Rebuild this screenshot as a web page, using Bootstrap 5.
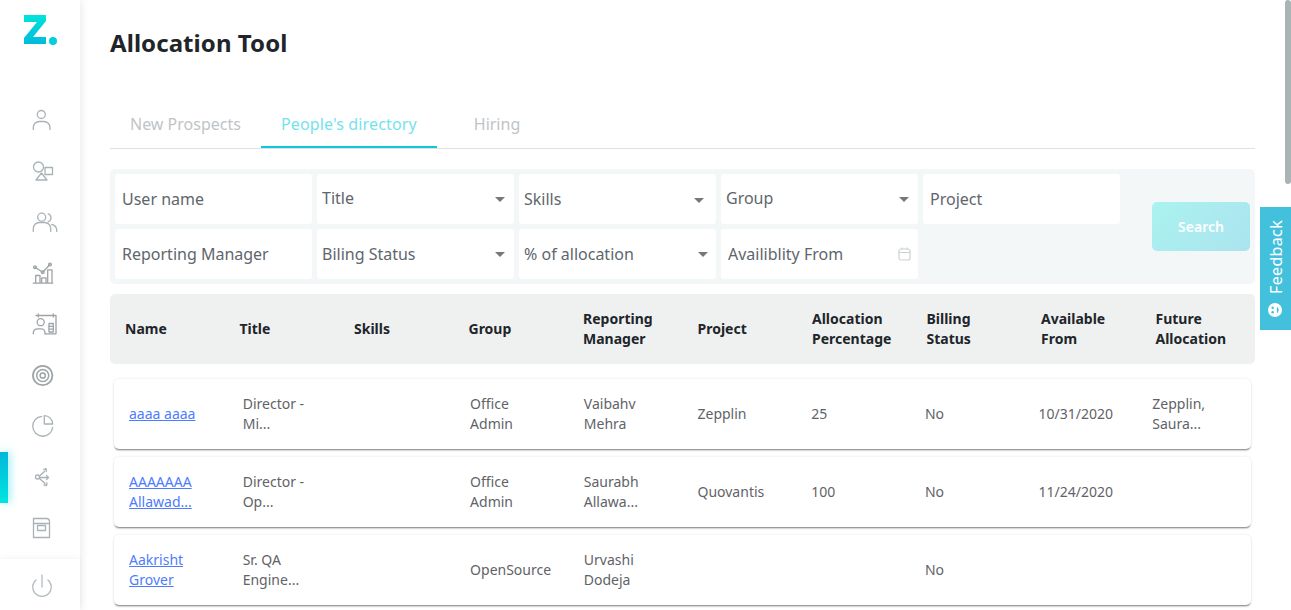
<!DOCTYPE html>
<html lang="en">
<head>
  <meta charset="UTF-8" />
  <meta name="viewport" content="width=device-width, initial-scale=1" />
  <title>Allocation Tool</title>
  <link href="https://cdn.jsdelivr.net/npm/bootstrap@5.3.0/dist/css/bootstrap.min.css" rel="stylesheet" />
  <style>
    html, body { height: 610px; overflow: hidden; }
    body { font-family: "Noto Sans", sans-serif; background: #fff; color: #212529; }
    .side-rail { width: 80px; height: 610px; flex: none; background: #fff; box-shadow: 2px 0 8px rgba(0,0,0,.08); position: relative; z-index: 2; }
    .rail-logo { height: 82px; padding: 14px 0 0 24px; }
    .rail-icons { padding-top: 12px; }
    .rail-item { height: 51px; display: flex; align-items: center; justify-content: center; padding-left: 4px; position: relative; }
    .rail-item svg { width: 24px; height: 24px; overflow: visible; fill: none; stroke: #a9b2b6; stroke-width: 1.3; stroke-linecap: round; stroke-linejoin: round; }
    .rail-item.is-active::before { content: ""; position: absolute; left: 0; top: 1px; width: 8px; height: 51px; background: linear-gradient(180deg, #00b8d9, #00e5e0); box-shadow: 2px 0 8px rgba(0,210,225,.4); }
    .rail-power { position: absolute; left: 0; right: 0; bottom: 0; height: 51px; padding-left: 4px; box-shadow: 0 -2px 4px rgba(0,0,0,.04); display: flex; align-items: center; justify-content: center; }
    .rail-power svg { width: 24px; height: 24px; fill: none; stroke: #b3bcc0; stroke-width: 1.3; stroke-linecap: round; }
    .main-area { padding: 27px 36px 0 30px; width: 1211px; flex: none; }
    .page-title { font-size: 24px; line-height: 32px; font-weight: 700; letter-spacing: .07px; color: #212529; margin: 0 0 49px; }
    .tab-strip { border-bottom: 1px solid #dee2e6; height: 41px; margin-bottom: 20px; }
    .tab-strip .nav-link { font-size: 16px; line-height: 22px; padding: 5px 20px 11px; color: #c0c4c8; border-bottom: 2px solid transparent; height: 40px; }
    .tab-strip .nav-link.active { color: #74e3ee; letter-spacing: .14px; border-bottom-color: #0cc8dc; }
    .tab-strip .tab-last { margin-left: 17px; }
    .filter-panel { background: #f3f7f8; border-radius: 5px; padding: 5px; height: 115px; margin-bottom: 10px; }
    .filter-grid { display: grid; grid-template-columns: repeat(5, 197px); grid-auto-rows: 50px; gap: 5px; }
    .filter-grid .form-control, .filter-grid .form-select { height: 50px; border: 0; border-radius: 3px; font-size: 16px; color: #60666c; box-shadow: none; }
    .filter-grid .form-control { padding: 0 7px; }
    .filter-grid .form-control::placeholder { color: #60666c; opacity: 1; }
    .filter-grid .form-select { padding: 0 5px; background-size: 10px 5px; background-position: right 9px center; background-image: url("data:image/svg+xml,%3Csvg xmlns='http://www.w3.org/2000/svg' viewBox='0 0 10 5'%3E%3Cpath d='M0 0h10L5 5z' fill='%23777'/%3E%3C/svg%3E"); }
    .filter-grid .form-select.select-high { padding-bottom: 2px; background-position: right 9px top 23px; }
    .filter-grid .form-select.select-skills { background-position: right 12px top 24px; }
    .filter-grid .form-select.select-alloc { background-position: right 8px center; }
    .date-field { position: relative; }
    .date-field svg { position: absolute; right: 7px; top: 18px; width: 13px; height: 14px; fill: none; stroke: #ccd1d4; stroke-width: 1.2; }
    .search-btn { width: 98px; height: 49px; margin: 28px 0 0 32px; border: 0; border-radius: 5px; background: linear-gradient(135deg, #aaf3ef, #abe3ef); color: #fff; font-size: 14px; font-weight: 600; padding: 0; }
    .grid-head, .grid-row { display: grid; grid-template-columns: repeat(10, minmax(0, 1fr)); align-items: center; }
    .grid-head { background: #eff1f1; border-radius: 5px; height: 70px; font-size: 14px; line-height: 20px; font-weight: 700; color: #212529; margin-bottom: 15px; }
    .grid-head > div { padding: 0 15px; }
    .grid-row { background: #fff; height: 70px; margin: 0 4px 8px; border-radius: 5px; font-size: 14px; line-height: 20px; color: #5f6368; box-shadow: 0 2px 2px -1px rgba(0,0,0,.5), 0 0 3px rgba(0,0,0,.1); }
    .grid-row > div { padding: 0 30px 0 15px; }
    .grid-row a { color: #4d7cfe; }
    .feedback-tab { position: absolute; right: 0; top: 207px; width: 31px; height: 123px; background: #42c0dc; color: #fff; font-size: 16px; letter-spacing: .35px; writing-mode: vertical-rl; transform: rotate(180deg); display: flex; align-items: center; justify-content: flex-start; gap: 9px; padding: 13px 0 0; z-index: 3; }
    .feedback-tab svg { width: 14px; height: 14px; flex: none; }
    .fake-scroll { position: absolute; right: 0; top: 0; width: 6px; height: 184px; background: #aab3b5; border-radius: 3px; z-index: 4; }
  </style>
</head>
<body>
  <div class="d-flex">
    <!-- left rail -->
    <aside class="side-rail">
      <div class="rail-logo">
        <svg width="36" height="32" viewBox="0 0 36 32">
          <defs><linearGradient id="logoFill" x1="0" y1="0" x2="0" y2="1"><stop offset="0" stop-color="#00e4dc"/><stop offset="1" stop-color="#00b9dc"/></linearGradient></defs>
          <path d="M0 1h22v6L9 23h13v7H0v-6L13 8H0z" fill="url(#logoFill)"/>
          <circle cx="29" cy="27" r="4" fill="#00d0dc"/>
        </svg>
      </div>
      <div class="rail-icons">
        <div class="rail-item"><svg viewBox="0 1 24 24"><circle cx="11.300" cy="7.500" r="4"/><path d="M3.300 22.500v-2a6 6 0 0 1 6-6h4.700a6 6 0 0 1 6 6v2"/></svg></div>
        <div class="rail-item"><svg viewBox="0 0 24 24"><circle cx="8.500" cy="8" r="5"/><rect x="15" y="8.500" width="7.500" height="7"/><path d="M11.500 14l5.500 7H6z"/></svg></div>
        <div class="rail-item"><svg viewBox="0 0 24 24"><circle cx="11.700" cy="7.200" r="4"/><path d="M3.300 21.500v-3a6 6 0 0 1 6-6h5.400a6 6 0 0 1 6 6v3"/><path d="M18.300 3.800a4.300 4.300 0 0 1 0 8M21.700 14.500a6 6 0 0 1 5 5v2"/></svg></div>
        <div class="rail-item"><svg viewBox="0 0 24 24" style="stroke:#9ea4a7"><path d="M3.300 22.200h19.400M5.700 22v-7.500H10V22M11.700 22v-5.200H16V22M17.700 22V8.800H22V22"/><path d="M5 6.200l7.700 5 7.300-7.700"/><circle cx="5" cy="6.200" r="1.400"/><circle cx="12.700" cy="11.200" r="1.400"/><circle cx="20" cy="3.500" r="1.400"/></svg></div>
        <div class="rail-item"><svg viewBox="0 0 24 24" style="stroke:#9ea4a7"><path d="M8.300 2v3M23.300 2v3M6 3.500h20v18.300H15"/><circle cx="10.700" cy="10.200" r="3.500"/><path d="M3.300 21.800v-1a4 4 0 0 1 4-4h3.700a4 4 0 0 1 4 4v1"/><rect x="19" y="11.500" width="4.300" height="8.500"/><path d="M19 14.300h4.300M19 17.100h4.300"/></svg></div>
        <div class="rail-item"><svg viewBox="0 0 24 24" style="stroke:#9ea4a7"><circle cx="12.700" cy="12.500" r="9.700" stroke-width="1.800"/><circle cx="12.700" cy="12.500" r="6" stroke-width="1.500"/><circle cx="12.700" cy="12.500" r="2.600" stroke-width="1.500"/></svg></div>
        <div class="rail-item"><svg viewBox="0 1 24 24"><path d="M11.700 3.300A10 10 0 1 0 22.700 14.300"/><path d="M14.300 2.700a8.300 8.300 0 0 1 8.400 8.300h-8.400z"/></svg></div>
        <div class="rail-item is-active"><svg viewBox="0 0 24 24" stroke-width="1.500"><circle cx="7.500" cy="12" r="2"/><path d="M9.500 11l5.500-5M9.500 12.500H18M9.500 13.500l5.500 5"/><path d="M13.500 4.500l2.500-1 .5 2.500M16.500 10.500l2 2-2 2M14 20l2.500.5.500-2.500"/></svg></div>
        <div class="rail-item"><svg viewBox="0 0 24 24"><path d="M3.500 2.500h13a3 3 0 0 1 3 3v16h-16z"/><path d="M3.500 7.500h16"/><rect x="7.500" y="9.500" width="8" height="5"/></svg></div>
      </div>
      <div class="rail-power"><svg viewBox="0 0 24 24"><path d="M12 2v12"/><path d="M6 7a9.300 9.300 0 1 0 12 0"/></svg></div>
    </aside>

    <!-- main content -->
    <main class="main-area">
      <h1 class="page-title">Allocation Tool</h1>

      <ul class="nav tab-strip">
        <li class="nav-item"><a class="nav-link" href="#">New Prospects</a></li>
        <li class="nav-item"><a class="nav-link active" href="#">People's directory</a></li>
        <li class="nav-item tab-last"><a class="nav-link" href="#">Hiring</a></li>
      </ul>

      <div class="filter-panel d-flex">
        <div class="filter-grid">
          <input class="form-control" type="text" placeholder="User name" />
          <select class="form-select select-high"><option>Title</option></select>
          <select class="form-select select-skills"><option>Skills</option></select>
          <select class="form-select select-high"><option>Group</option></select>
          <input class="form-control" type="text" placeholder="Project" />
          <input class="form-control" type="text" placeholder="Reporting Manager" />
          <select class="form-select"><option>Biling Status</option></select>
          <select class="form-select select-alloc"><option>% of allocation</option></select>
          <div class="date-field">
            <input class="form-control" type="text" placeholder="Availiblity From" />
            <svg viewBox="0 0 13 14"><rect x="1" y="2" width="11" height="11" rx="2"/><path d="M1 5.500h11M4 .500v2M9 .500v2"/></svg>
          </div>
        </div>
        <button class="search-btn" type="button">Search</button>
      </div>

      <div class="grid-head">
        <div>Name</div><div>Title</div><div>Skills</div><div>Group</div><div>Reporting Manager</div>
        <div>Project</div><div>Allocation Percentage</div><div>Billing Status</div><div>Available From</div><div>Future Allocation</div>
      </div>

      <div class="grid-row">
        <div><a href="#">aaaa aaaa</a></div><div>Director - Mi...</div><div></div><div>Office Admin</div><div>Vaibahv Mehra</div>
        <div>Zepplin</div><div>25</div><div>No</div><div>10/31/2020</div><div>Zepplin, Saura...</div>
      </div>
      <div class="grid-row">
        <div><a href="#">AAAAAAA Allawad...</a></div><div>Director - Op...</div><div></div><div>Office Admin</div><div>Saurabh Allawa...</div>
        <div>Quovantis</div><div>100</div><div>No</div><div>11/24/2020</div><div></div>
      </div>
      <div class="grid-row">
        <div><a href="#">Aakrisht Grover</a></div><div>Sr. QA Engine...</div><div></div><div>OpenSource</div><div>Urvashi Dodeja</div>
        <div></div><div></div><div>No</div><div></div><div></div>
      </div>
    </main>
  </div>

  <div class="feedback-tab">
    <svg viewBox="0 0 15 15"><g transform="rotate(90 7.500 7.500)"><circle cx="7.500" cy="7.500" r="7.500" fill="#fff"/><circle cx="10" cy="5" r="1.300" fill="#42c0dc"/><circle cx="5" cy="5" r="1.300" fill="#42c0dc"/><path d="M4 9.500c1.500 2.500 5.500 2.500 7 0z" fill="#42c0dc"/></g></svg>
    <span>Feedback</span>
  </div>
  <div class="fake-scroll"></div>

  <script src="https://cdn.jsdelivr.net/npm/bootstrap@5.3.0/dist/js/bootstrap.bundle.min.js"></script>
</body>
</html>
